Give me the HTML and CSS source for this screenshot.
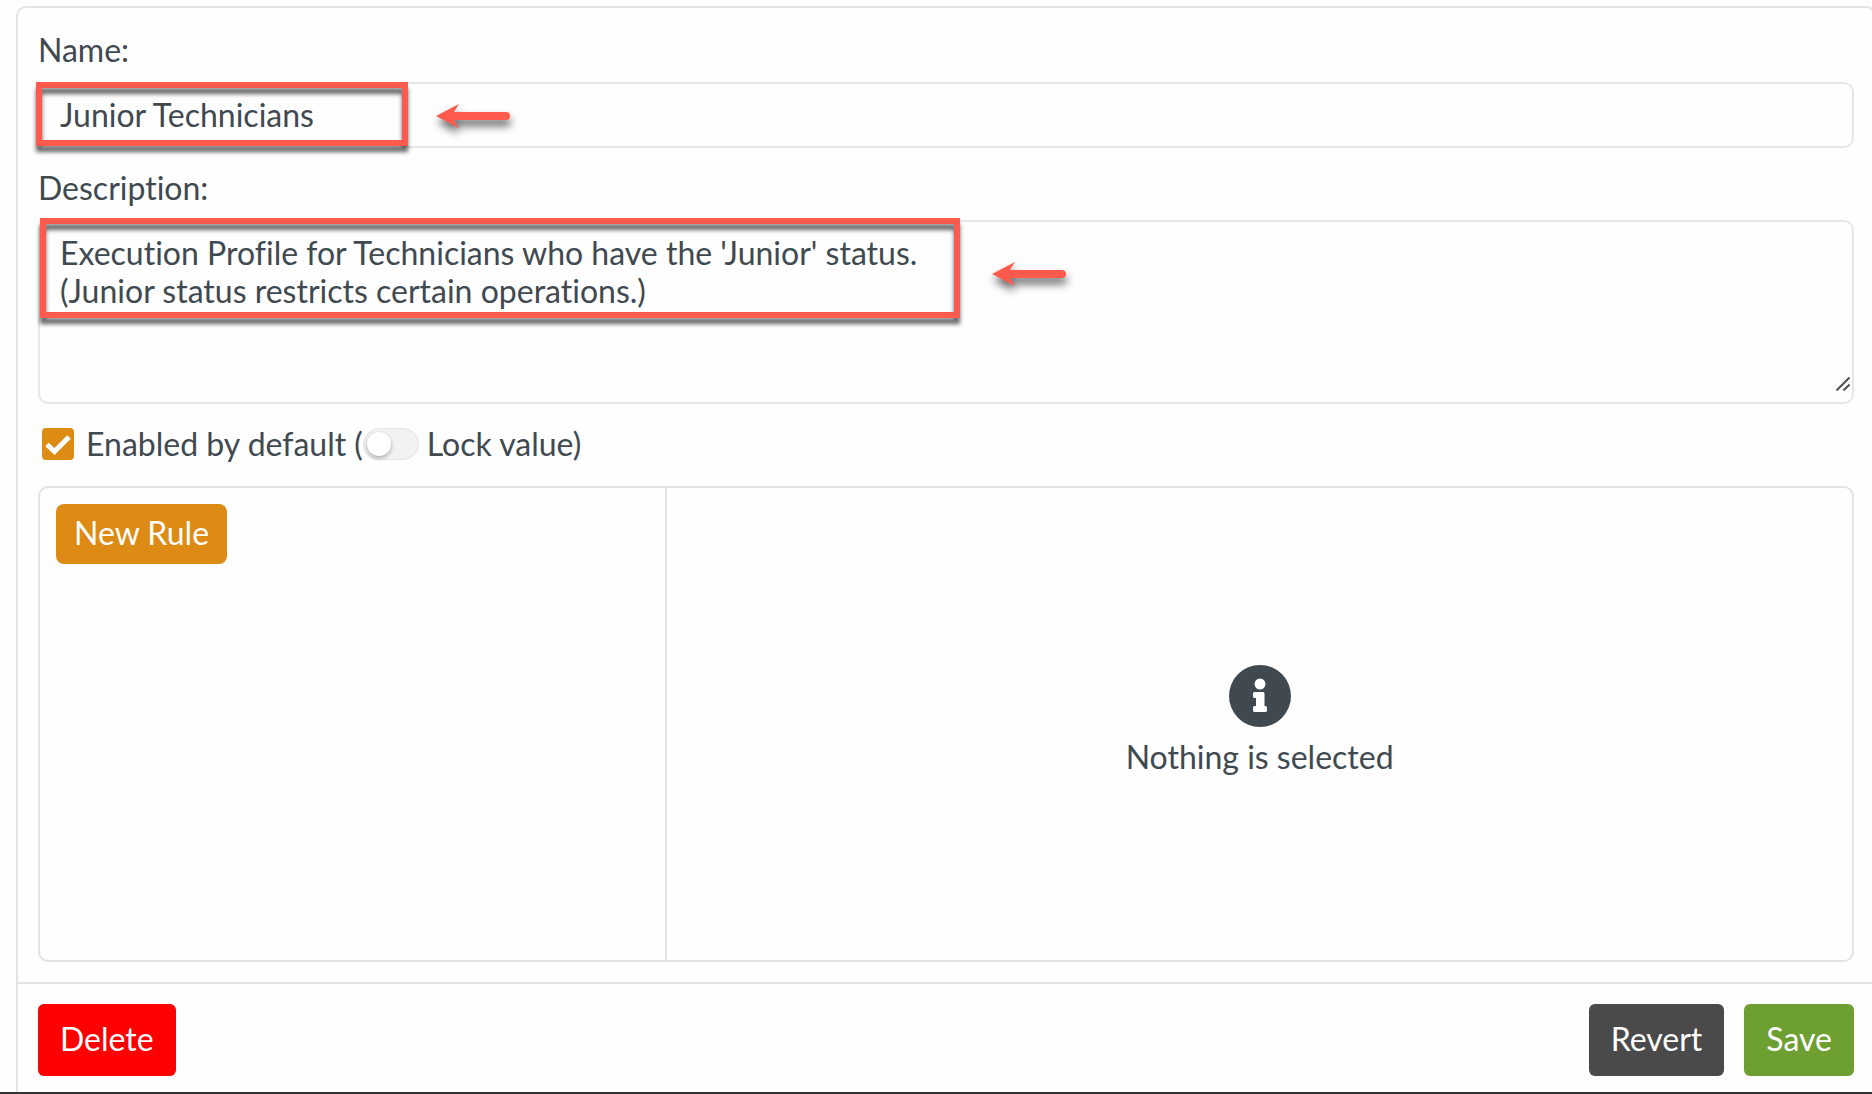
FILE: index.html
```html
<!DOCTYPE html>
<html lang="en">
<head>
  <meta charset="UTF-8">
  <meta name="viewport" content="width=device-width, initial-scale=1.0">
  <title>Execution Profile</title>
  <link rel="stylesheet" href="styles.css">
</head>
<body>
  <form class="profile-card">
    <div class="profile-body">
      <label class="field-label" for="name">Name:</label>
      <div class="field">
        <input type="text" id="name" name="name" class="text-box" value="Junior Technicians">
        <div class="highlight highlight-name"></div>
        <svg class="arrow arrow-name" width="74" height="24" viewBox="0 0 74 24" aria-hidden="true">
          <path d="M0 12 L23 0 L18 8 H70 A4 4 0 0 1 70 16 H18 L23 24 Z"/>
        </svg>
      </div>

      <label class="field-label" for="description">Description:</label>
      <div class="field">
        <textarea id="description" name="description" class="text-box">Execution Profile for Technicians who have the 'Junior' status.
(Junior status restricts certain operations.)</textarea>
        <div class="highlight highlight-description"></div>
        <svg class="arrow arrow-description" width="74" height="24" viewBox="0 0 74 24" aria-hidden="true">
          <path d="M0 12 L23 0 L18 8 H70 A4 4 0 0 1 70 16 H18 L23 24 Z"/>
        </svg>
        <svg class="grip" width="14" height="14" viewBox="0 0 14 14" aria-hidden="true">
          <path d="M0.5 13.5 L13.5 0.5 M7.5 13.5 L13.5 7.5"/>
        </svg>
      </div>

      <div class="options">
        <input type="checkbox" id="enabled" class="check" checked>
        <label for="enabled">Enabled by default</label>
        <span class="lock">(<input type="checkbox" id="lock" class="switch" role="switch"><label for="lock">Lock value)</label></span>
      </div>

      <div class="rules">
        <div class="rules-list">
          <button type="button" class="btn btn-new">New Rule</button>
        </div>
        <div class="rules-detail">
          <svg width="62" height="62" viewBox="0 0 62 62" aria-hidden="true">
            <circle cx="31" cy="31" r="31" fill="#404950"/>
            <circle cx="31" cy="19" r="5.5" fill="#fff"/>
            <path d="M25.5 27 H34 Q35.5 27 35.5 28.5 V41 H36.5 Q38 41 38 42.5 V45.5 Q38 47 36.5 47 H25.5 Q24 47 24 45.5 V42.5 Q24 41 25.5 41 H27 V33 H25.5 Q24 33 24 31.5 V28.5 Q24 27 25.5 27 Z" fill="#fff"/>
          </svg>
          <p>Nothing is selected</p>
        </div>
      </div>
    </div>

    <div class="profile-footer">
      <button type="button" class="btn btn-delete">Delete</button>
      <button type="reset" class="btn btn-revert">Revert</button>
      <button type="submit" class="btn btn-save">Save</button>
    </div>
  </form>
</body>
</html>
```
FILE: styles.css
```css
* {
  box-sizing: border-box;
}
body {
  display: flex;
  min-height: 100vh;
  margin: 0;
  padding: 6px 0 0 16px;
  overflow-x: hidden;
  border-bottom: 2px solid #333;
  background: #fefefe;
  color: #404950;
  font-family: Lato, "Open Sans", sans-serif;
  font-size: 32px;
  font-variant-ligatures: none;
  line-height: 36px;
}
input, textarea, button {
  font: inherit;
  color: inherit;
}

/* Card */
.profile-card {
  display: flex;
  flex: 1;
  flex-direction: column;
  margin-right: -4px;
  border: 2px solid #e4e4e4;
  border-bottom: none;
  border-radius: 10px 10px 0 0;
}
.profile-body {
  display: flex;
  flex: 1;
  flex-direction: column;
  padding: 24px 20px 20px;
}

/* Fields */
.field-label {
  margin-bottom: 14px;
}
.field {
  position: relative;
  margin-bottom: 22px;
}
.text-box {
  display: block;
  width: 100%;
  padding: 12px 20px;
  border: 2px solid #e6e6e6;
  border-radius: 10px;
  background: transparent;
  outline: none;
}
input.text-box {
  height: 66px;
  padding-bottom: 14px;
}
textarea.text-box {
  height: 184px;
  line-height: 38px;
  resize: none;
}
.grip {
  position: absolute;
  right: 4px;
  bottom: 13px;
  stroke: #505050;
  stroke-width: 2;
}

/* Highlights and arrows over the fields */
.highlight {
  position: absolute;
  border: 6px solid #ff5a4d;
  filter: drop-shadow(0 6px 2px rgba(0, 0, 0, 0.6));
  pointer-events: none;
}
.highlight-name {
  top: 0;
  left: -2px;
  width: 372px;
  height: 64px;
}
.highlight-description {
  top: -2px;
  left: 2px;
  width: 920px;
  height: 100px;
}
.arrow {
  position: absolute;
  overflow: visible;
  fill: #ff5a4d;
  filter: drop-shadow(1px 6px 4px rgba(0, 0, 0, 0.6));
  pointer-events: none;
}
.arrow-name {
  top: 22px;
  left: 398px;
}
.arrow-description {
  top: 42px;
  left: 954px;
}

/* Options row */
.options {
  display: flex;
  align-items: center;
  height: 36px;
  margin-bottom: 24px;
  padding-left: 4px;
}
.check {
  appearance: none;
  width: 32px;
  height: 32px;
  margin: 0 12px 0 0;
  border-radius: 4px;
  background: #dd8b14 url("data:image/svg+xml,%3Csvg xmlns='http://www.w3.org/2000/svg' viewBox='0 0 32 32'%3E%3Cpath d='M5 16.5 L12.5 23.5 L27 9' fill='none' stroke='white' stroke-width='5'/%3E%3C/svg%3E");
}
.lock {
  display: flex;
  align-items: center;
  margin-left: 8px;
}
.switch {
  appearance: none;
  width: 56px;
  height: 32px;
  margin: 0 8px 0 0;
  padding: 3px;
  border: 1px solid #e6e6e6;
  border-radius: 16px;
  background: #f2f2f2;
}
.switch::before {
  content: "";
  display: block;
  width: 24px;
  height: 24px;
  border-radius: 50%;
  background: #fff;
  box-shadow: 0 2px 4px rgba(0, 0, 0, 0.3);
}
.switch:checked::before {
  margin-left: auto;
}

/* Rules panel */
.rules {
  display: grid;
  flex: 1;
  grid-template-columns: 9fr 17fr;
  border: 2px solid #e4e4e4;
  border-radius: 10px;
}
.rules-list {
  padding: 16px;
  border-right: 2px solid #e4e4e4;
}
.rules-detail {
  display: flex;
  flex-direction: column;
  align-items: center;
  justify-content: center;
  padding-bottom: 8px;
}
.rules-detail p {
  margin: 12px 0 0;
}

/* Buttons */
.btn {
  padding: 17px 22px 19px;
  border: none;
  border-radius: 6px;
  color: #fff;
  cursor: pointer;
}
.btn-new {
  padding: 11px 18px 13px;
  border-radius: 8px;
  background: #dd8b14;
}
.btn-delete {
  margin-right: auto;
  background: #f00;
}
.btn-revert {
  background: #4a4a4a;
}
.btn-save {
  background: #6d9f31;
}
.profile-footer {
  display: flex;
  gap: 20px;
  padding: 20px 20px 16px;
  border-top: 2px solid #e4e4e4;
}
```
